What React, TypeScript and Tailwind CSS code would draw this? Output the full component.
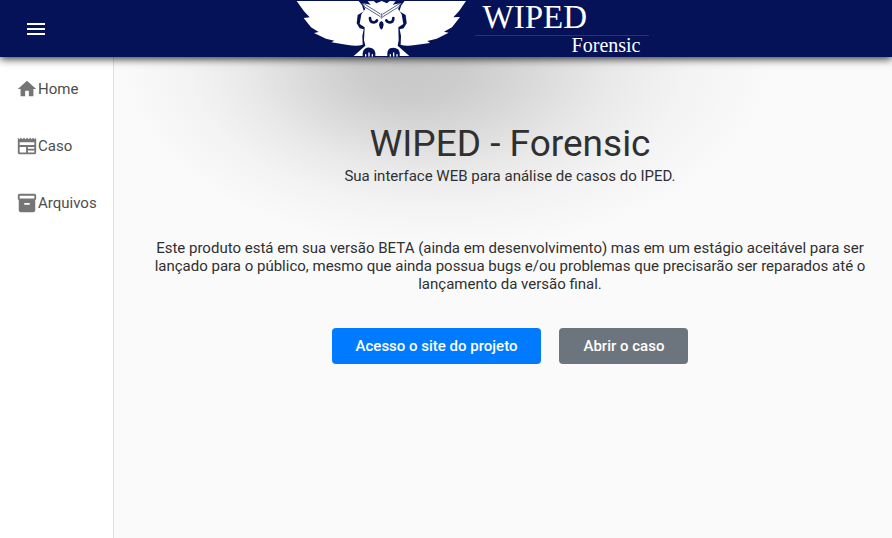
import { MdHome, MdInventory2, MdMenu, MdNewspaper } from "react-icons/md";

const links = [
  { label: "Home", Icon: MdHome },
  { label: "Caso", Icon: MdNewspaper },
  { label: "Arquivos", Icon: MdInventory2 },
];

function Owl() {
  return (
    <svg viewBox="0 0 555 171" className="h-[57px] w-[185px]" aria-hidden="true">
      <g fill="#fff">
        <path d="M20 3H206L216 16L222 34L203 45L200 70L209 85L221 88L217 108L218 134Q202 140 174 135L124 127L133 122L108 116L72 99L86 96L63 82L41 54L59 52L42 34Z" />
        <path d="M528 3H344L334 16L328 34L347 45L350 70L341 85L329 88L333 108L332 134Q348 140 376 135L420 129L412 123L440 116L476 98L462 95L486 82L510 51L490 52L508 32Z" />
        <path d="M233 4L251 3L259 10L275 3L291 10L299 3L317 4L308 14L334 9L324 27L335 43L340 72L325 82L326 120L323 137L358 168H191L226 137L222 120L224 82L209 72L214 43L226 27L216 9L242 14Z" />
      </g>
      <g fill="none" stroke="#061257" strokeLinecap="round">
        <path d="M217 10Q222 24 236 28L271 50M333 10Q328 24 314 28L279 50" strokeWidth="2" />
        <path d="M220 10L271 42M330 10L279 42" strokeWidth="2" />
        <path d="M275 42V54" strokeWidth="5" stroke="#7881a6" />
        <path d="M240 54Q240 67 250 67Q258 67 261 61M310 54Q310 67 300 67Q292 67 289 61" strokeWidth="8" />
      </g>
      <g fill="#061257">
        <path d="M274 63Q281 65 281 74Q280 84 274 89Q268 83 267 74Q267 66 274 63Z" />
        <path d="M218 168Q216 148 230 143Q246 140 253 150Q258 159 256 168ZM292 168Q290 152 300 145Q315 140 324 148Q331 155 329 168Z" />
      </g>
      <g stroke="#fff" strokeLinecap="round" strokeWidth="4">
        <path d="M227 164V168M237 159V168M247 164V168M301 164V168M311 159V168M321 164V168" />
      </g>
    </svg>
  );
}

function Glow() {
  return (
    <svg
      className="pointer-events-none absolute inset-x-0 top-0 h-[196px] w-full"
      viewBox="0 0 778 196"
      preserveAspectRatio="none"
      aria-hidden="true"
    >
      <defs>
        <radialGradient
          id="glow"
          gradientUnits="userSpaceOnUse"
          cx="0"
          cy="0"
          r="1"
          fx="-0.13"
          fy="0.08"
          gradientTransform="translate(334 0) scale(330 194)"
        >
          <stop offset="0" stopColor="#c9c9c9" />
          <stop offset="0.15" stopColor="#cccccc" />
          <stop offset="0.35" stopColor="#dadada" />
          <stop offset="0.55" stopColor="#e9e9e9" />
          <stop offset="0.75" stopColor="#f3f3f3" />
          <stop offset="1" stopColor="#fafafa" />
        </radialGradient>
      </defs>
      <rect width="778" height="196" fill="url(#glow)" />
    </svg>
  );
}

export default function App() {
  return (
    <div className="flex min-h-screen flex-col bg-[#fafafa] font-['Roboto',sans-serif] text-[#303030]">
      <header className="relative z-10 flex h-[57px] items-center bg-[#061257] px-6 text-white shadow-[0_2px_8px_rgba(0,0,0,0.8)]">
        <button type="button" aria-label="Menu" className="flex">
          <MdMenu size={24} />
        </button>
        <div className="flex flex-1 justify-center pl-[22px]">
          <Owl />
          <div className="flex w-[174px] flex-col font-['Liberation_Serif',serif]">
            <span className="border-b border-[#27326f] pl-2 text-[33px]/[35px]">WIPED</span>
            <span className="pr-2 text-right text-[20px]/[18px]">Forensic</span>
          </div>
        </div>
      </header>
      <div className="flex flex-1">
        <nav className="flex w-[114px] shrink-0 flex-col gap-[33px] border-r border-[#e0e0e0] bg-white py-5 pl-4">
          {links.map(({ label, Icon }) => (
            <a key={label} href="#" className="flex h-6 items-center text-[15px] text-[#4d4d4d]">
              <Icon size={22} className="shrink-0 text-[#757575]" />
              {label}
            </a>
          ))}
        </nav>
        <main className="relative flex-1">
          <Glow />
          <div className="relative flex flex-col items-center pt-16 pr-4 pl-[30px] text-center text-[15px]/[18px]">
            <h1 className="text-[37px]/[46px]">WIPED - Forensic</h1>
            <p>Sua interface WEB para análise de casos do IPED.</p>
            <p className="mt-[54px]">
              Este produto está em sua versão BETA (ainda em desenvolvimento) mas em um estágio aceitável para ser
              lançado para o público, mesmo que ainda possua bugs e/ou problemas que precisarão ser reparados até o
              lançamento da versão final.
            </p>
            <div className="mt-[35px] flex gap-[18px] font-medium text-white">
              <a href="#" className="flex h-9 items-center rounded bg-[#007bff] px-6">
                Acesso o site do projeto
              </a>
              <button type="button" className="h-9 rounded bg-[#6c757d] px-6">
                Abrir o caso
              </button>
            </div>
          </div>
        </main>
      </div>
    </div>
  );
}
